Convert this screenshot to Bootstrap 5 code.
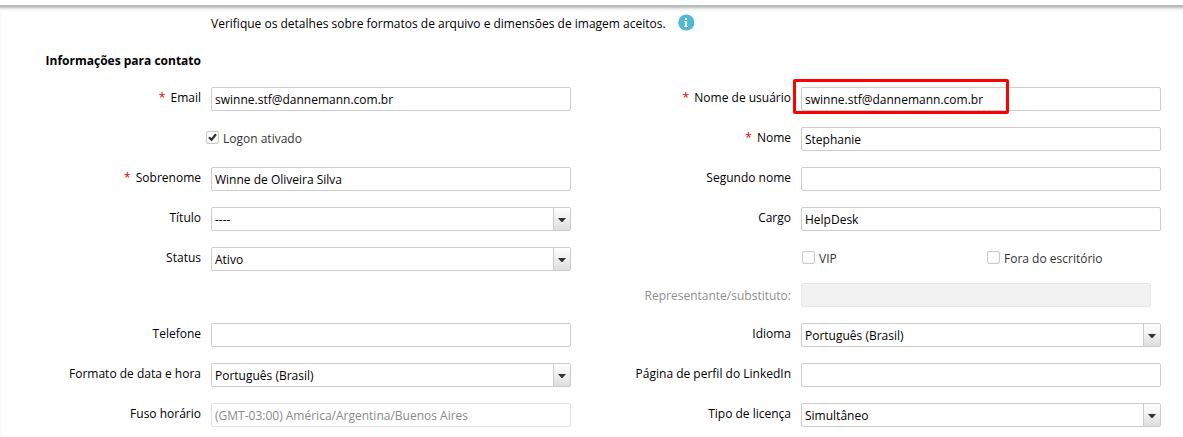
<!DOCTYPE html>
<html lang="pt-BR">
<head>
<meta charset="utf-8">
<meta name="viewport" content="width=device-width, initial-scale=1">
<title>Informações para contato</title>
<link href="https://cdn.jsdelivr.net/npm/bootstrap@5.3.0/dist/css/bootstrap.min.css" rel="stylesheet">
<style>
body{font-family:"Open Sans",sans-serif;font-size:12px;line-height:17px;color:#000;background:#fff}
.page-top{height:5px}
.panel{height:432px;overflow:hidden;background:linear-gradient(#b9b9b9 0,#bfbfbf 2px,#dcdcdc 3px,#ececec 4px,#f7f7f7 5px,#fff 7px) no-repeat 0 0/100% 8px,linear-gradient(#f7f7f7,#f7f7f7) no-repeat 0 0/1px 100%}
.hint{height:46px;padding:10px 0 0 211px}
.hint svg{margin:-1px 0 0 12px}
.section-title{width:201px;height:36px;padding-top:1px;font-size:12px;line-height:17px;font-weight:700}
.form-col{width:590px}
.field-row{height:40px;gap:10px}
.field-row.short{height:36px}
.lbl{width:201px;padding-top:2px;text-align:right;white-space:nowrap}
.req{color:#e00000;margin-right:2px}
.field{width:360px;height:24px;min-height:0;padding:3px 3px 0;border:1px solid #ccc;border-radius:2px;font-size:12px;line-height:17px;color:#000;background:#fff;white-space:nowrap}
.field.combo{padding-right:0}
.combo-btn{width:17px;height:22px;margin-top:-3px;border-left:1px solid #ccc;background:linear-gradient(#fff,#dedede)}
.combo-btn svg{display:block}
.field.off{color:#8a8a8a;border-color:#e2e2e2}
.field.gray{width:350px;background:#f2f2f2;border-color:#e6e6e6}
.lbl.muted{color:#8f8f8f;padding-top:4px}
.tick{width:13px;height:13px;border:1px solid #ccc;border-radius:2px;background:#fff;box-shadow:inset 0 0 1px #bbb;margin-top:4px}
.tick svg{display:block}
.chk{color:#333;gap:4px}
.chk span{padding-top:3px}
.chk-first{margin-left:-5px}
.chk-vip{width:185px;margin-left:1px}
.marker{left:-8px;top:-8px;width:216px;height:35px;border:3px solid #f00;border-radius:2px}
</style>
</head>
<body>
<div class="page-top"></div>
<main class="panel">
  <div class="hint d-flex align-items-start"><span>Verifique os detalhes sobre formatos de arquivo e dimensões de imagem aceitos.</span>
    <svg class="flex-shrink-0" width="17" height="17" viewBox="0 0 17 17"><circle cx="8.3" cy="8.5" r="8.1" fill="#52b9d5"/><path d="M7 4h2v2H7zM6 7h3v5h1v1H6v-1h1V8H6z" fill="#fff"/></svg>
  </div>
  <h2 class="section-title text-end mb-0">Informações para contato</h2>
  <form class="d-flex">
    <div class="form-col flex-shrink-0">
      <div class="field-row d-flex"><div class="lbl"><span class="req">*</span> Email</div><div class="form-control field">swinne.stf@dannemann.com.br</div></div>
      <div class="field-row d-flex"><div class="lbl"></div><div class="chk chk-first d-flex"><i class="tick"><svg width="11" height="11" viewBox="0 0 11 11"><path d="M2 5.2l2.5 2.6L9 2.2" fill="none" stroke="#333" stroke-width="2.2"/></svg></i><span>Logon ativado</span></div></div>
      <div class="field-row d-flex"><div class="lbl"><span class="req">*</span> Sobrenome</div><div class="form-control field">Winne de Oliveira Silva</div></div>
      <div class="field-row d-flex"><div class="lbl">Título</div><div class="form-control field combo d-flex justify-content-between"><span>----</span><span class="combo-btn"><svg width="16" height="22" viewBox="0 0 16 22"><path d="M4 10h8l-3.5 4h-1z" fill="#333"/></svg></span></div></div>
      <div class="field-row short d-flex"><div class="lbl">Status</div><div class="form-control field combo d-flex justify-content-between"><span>Ativo</span><span class="combo-btn"><svg width="16" height="22" viewBox="0 0 16 22"><path d="M4 10h8l-3.5 4h-1z" fill="#333"/></svg></span></div></div>
      <div class="field-row"></div>
      <div class="field-row d-flex"><div class="lbl">Telefone</div><div class="form-control field"></div></div>
      <div class="field-row d-flex"><div class="lbl">Formato de data e hora</div><div class="form-control field combo d-flex justify-content-between"><span>Português (Brasil)</span><span class="combo-btn"><svg width="16" height="22" viewBox="0 0 16 22"><path d="M4 10h8l-3.5 4h-1z" fill="#333"/></svg></span></div></div>
      <div class="field-row d-flex"><div class="lbl">Fuso horário</div><div class="form-control field off">(GMT-03:00) América/Argentina/Buenos Aires</div></div>
    </div>
    <div class="form-col flex-shrink-0">
      <div class="field-row d-flex"><div class="lbl"><span class="req">*</span> Nome de usuário</div><div class="position-relative"><div class="form-control field">swinne.stf@dannemann.com.br</div><div class="marker position-absolute"></div></div></div>
      <div class="field-row d-flex"><div class="lbl"><span class="req">*</span> Nome</div><div class="form-control field">Stephanie</div></div>
      <div class="field-row d-flex"><div class="lbl">Segundo nome</div><div class="form-control field"></div></div>
      <div class="field-row d-flex"><div class="lbl">Cargo</div><div class="form-control field">HelpDesk</div></div>
      <div class="field-row short d-flex"><div class="lbl"></div><div class="d-flex"><div class="chk chk-vip d-flex"><i class="tick"></i><span>VIP</span></div><div class="chk d-flex"><i class="tick"></i><span>Fora do escritório</span></div></div></div>
      <div class="field-row d-flex"><div class="lbl muted">Representante/substituto:</div><div class="form-control field gray"></div></div>
      <div class="field-row d-flex"><div class="lbl">Idioma</div><div class="form-control field combo d-flex justify-content-between"><span>Português (Brasil)</span><span class="combo-btn"><svg width="16" height="22" viewBox="0 0 16 22"><path d="M4 10h8l-3.5 4h-1z" fill="#333"/></svg></span></div></div>
      <div class="field-row d-flex"><div class="lbl">Página de perfil do LinkedIn</div><div class="form-control field"></div></div>
      <div class="field-row d-flex"><div class="lbl">Tipo de licença</div><div class="form-control field combo d-flex justify-content-between"><span>Simultâneo</span><span class="combo-btn"><svg width="16" height="22" viewBox="0 0 16 22"><path d="M4 10h8l-3.5 4h-1z" fill="#333"/></svg></span></div></div>
    </div>
  </form>
</main>
<script src="https://cdn.jsdelivr.net/npm/bootstrap@5.3.0/dist/js/bootstrap.bundle.min.js"></script>
</body>
</html>
